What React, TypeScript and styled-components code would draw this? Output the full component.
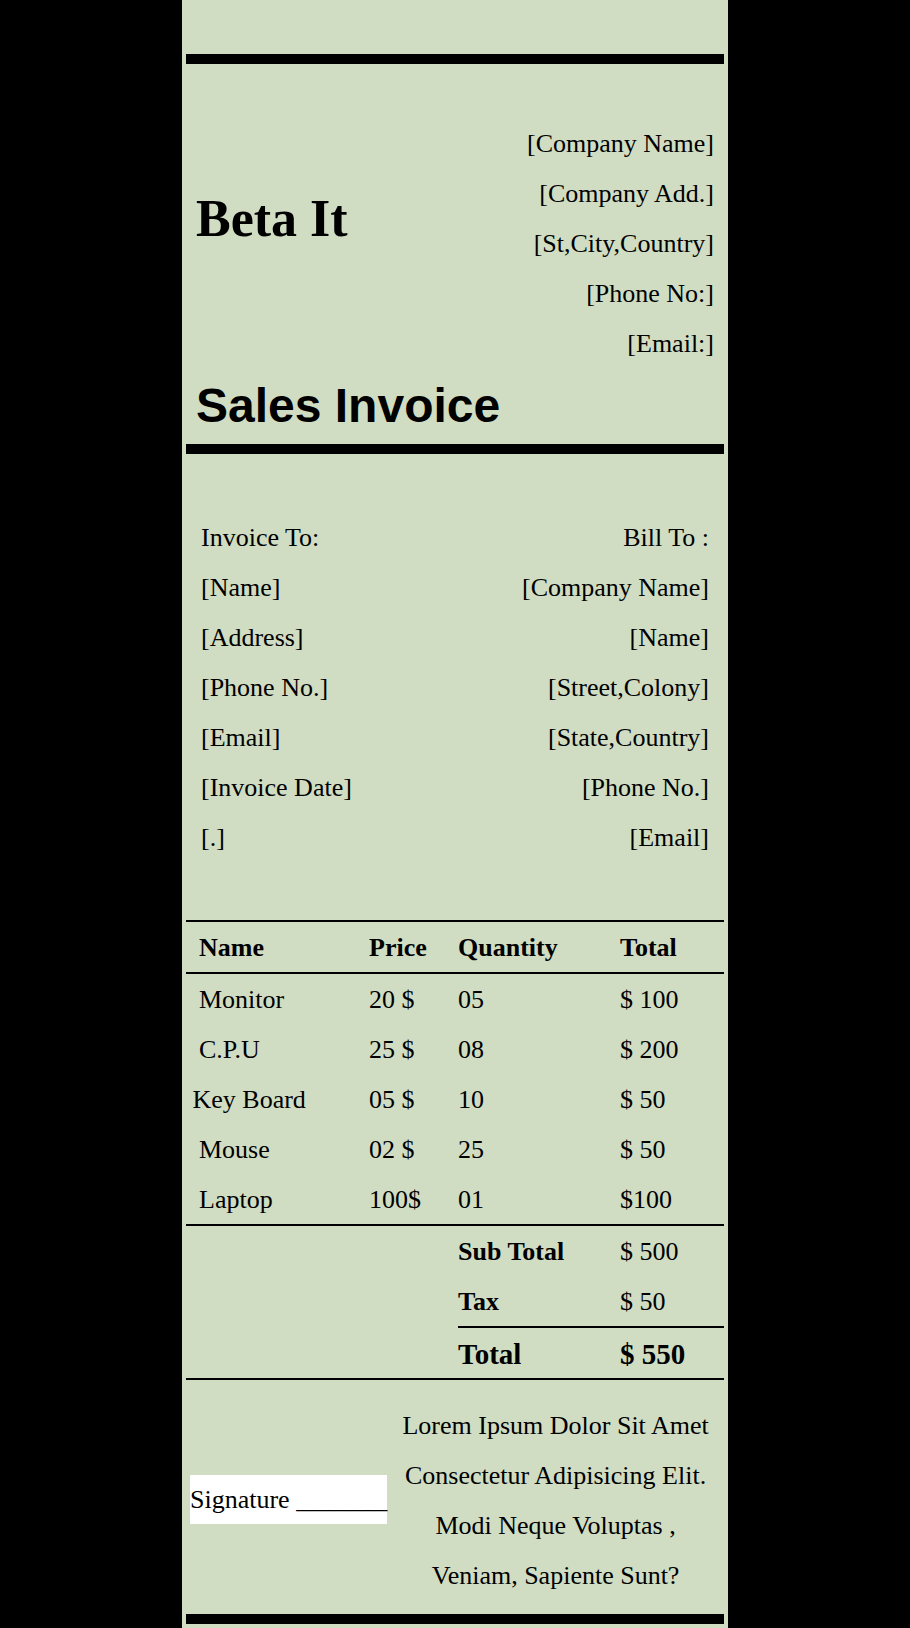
import styled, { createGlobalStyle } from 'styled-components'

const GlobalStyle = createGlobalStyle`
  html, body {
    margin: 0;
    padding: 0;
    background: #000;
  }
  body {
    font-family: 'Liberation Serif', 'Times New Roman', serif;
    color: #000;
  }
`

const COLUMNS = '183px 89px 162px 104px'

const items = [
  { name: 'Monitor', price: '20 $', qty: '05', total: '$ 100', indent: true },
  { name: 'C.P.U', price: '25 $', qty: '08', total: '$ 200', indent: true },
  { name: 'Key Board', price: '05 $', qty: '10', total: '$ 50', indent: false },
  { name: 'Mouse', price: '02 $', qty: '25', total: '$ 50', indent: true },
  { name: 'Laptop', price: '100$', qty: '01', total: '$100', indent: true },
]

const company = ['[Company Name]', '[Company Add.]', '[St,City,Country]', '[Phone No:]', '[Email:]']
const invoiceTo = ['Invoice To:', '[Name]', '[Address]', '[Phone No.]', '[Email]', '[Invoice Date]', '[.]']
const billTo = ['Bill To :', '[Company Name]', '[Name]', '[Street,Colony]', '[State,Country]', '[Phone No.]', '[Email]']
const note = [
  'Lorem Ipsum Dolor Sit Amet',
  'Consectetur Adipisicing Elit.',
  'Modi Neque Voluptas ,',
  'Veniam, Sapiente Sunt?',
]

const Sheet = styled.div`
  width: 546px;
  margin: 0 auto;
  padding: 54px 4px 4px;
  box-sizing: border-box;
  background: #d0ddc3;
  font-size: 26px;
`

const Bar = styled.div`
  height: 10px;
  background: #000;
`

const Header = styled.header`
  padding: 55px 10px 10px;
`

const HeaderRow = styled.div`
  display: flex;
  justify-content: space-between;
  align-items: center;
`

const Brand = styled.h1`
  margin: 0 0 50px;
  font-size: 52px;
  line-height: 60px;
  font-weight: 700;
`

const Lines = styled.div<{ $align: 'left' | 'right' | 'center' }>`
  text-align: ${(p) => p.$align};
  line-height: 50px;
  white-space: nowrap;
`

const DocTitle = styled.h2`
  margin: 9px 0 0;
  font-family: 'Liberation Sans', Arial, sans-serif;
  font-size: 48px;
  line-height: 56px;
  font-weight: 700;
`

const Parties = styled.section`
  display: flex;
  justify-content: space-between;
  padding: 59px 15px 57px;
`

const TableRow = styled.div<{ $top?: boolean; $bottom?: boolean; $big?: boolean }>`
  display: grid;
  grid-template-columns: ${COLUMNS};
  line-height: 48px;
  font-size: ${(p) => (p.$big ? 29 : 26)}px;
  border-top: ${(p) => (p.$top ? '2px solid #000' : 'none')};
  border-bottom: ${(p) => (p.$bottom ? '2px solid #000' : 'none')};
`

const Cell = styled.div<{ $bold?: boolean; $indent?: number; $rule?: boolean }>`
  padding: 2px 0 0 ${(p) => p.$indent ?? 0}px;
  font-weight: ${(p) => (p.$bold ? 700 : 400)};
  border-top: ${(p) => (p.$rule ? '2px solid #000' : 'none')};
  white-space: nowrap;
`

const Footer = styled.footer`
  display: flex;
  align-items: center;
  padding: 19px 0 13px 4px;
`

const Signature = styled.div`
  background: #fff;
  line-height: 49px;
  white-space: pre;
  margin-bottom: 2px;
`

const Note = styled(Lines)`
  flex: 1;
  padding-top: 2px;
`

export default function App() {
  return (
    <>
      <GlobalStyle />
      <Sheet>
        <Bar />
        <Header>
          <HeaderRow>
            <Brand>Beta It</Brand>
            <Lines $align="right">
              {company.map((line) => (
                <div key={line}>{line}</div>
              ))}
            </Lines>
          </HeaderRow>
          <DocTitle>Sales Invoice</DocTitle>
        </Header>
        <Bar />

        <Parties>
          <Lines $align="left">
            {invoiceTo.map((line) => (
              <div key={line}>{line}</div>
            ))}
          </Lines>
          <Lines $align="right">
            {billTo.map((line) => (
              <div key={line}>{line}</div>
            ))}
          </Lines>
        </Parties>

        <TableRow $top $bottom>
          <Cell $bold $indent={13}>Name</Cell>
          <Cell $bold>Price</Cell>
          <Cell $bold>Quantity</Cell>
          <Cell $bold>Total</Cell>
        </TableRow>
        {items.map((item, i) => (
          <TableRow key={item.name} $bottom={i === items.length - 1}>
            <Cell $indent={item.indent ? 13 : 6.5}>{item.name}</Cell>
            <Cell>{item.price}</Cell>
            <Cell>{item.qty}</Cell>
            <Cell>{item.total}</Cell>
          </TableRow>
        ))}
        <TableRow>
          <Cell />
          <Cell />
          <Cell $bold>Sub Total</Cell>
          <Cell>$ 500</Cell>
        </TableRow>
        <TableRow>
          <Cell />
          <Cell />
          <Cell $bold>Tax</Cell>
          <Cell>$ 50</Cell>
        </TableRow>
        <TableRow $big $bottom>
          <Cell />
          <Cell />
          <Cell $bold $rule>Total</Cell>
          <Cell $bold $rule>$ 550</Cell>
        </TableRow>

        <Footer>
          <Signature>Signature _______</Signature>
          <Note $align="center">
            {note.map((line) => (
              <div key={line}>{line}</div>
            ))}
          </Note>
        </Footer>
        <Bar />
      </Sheet>
    </>
  )
}
